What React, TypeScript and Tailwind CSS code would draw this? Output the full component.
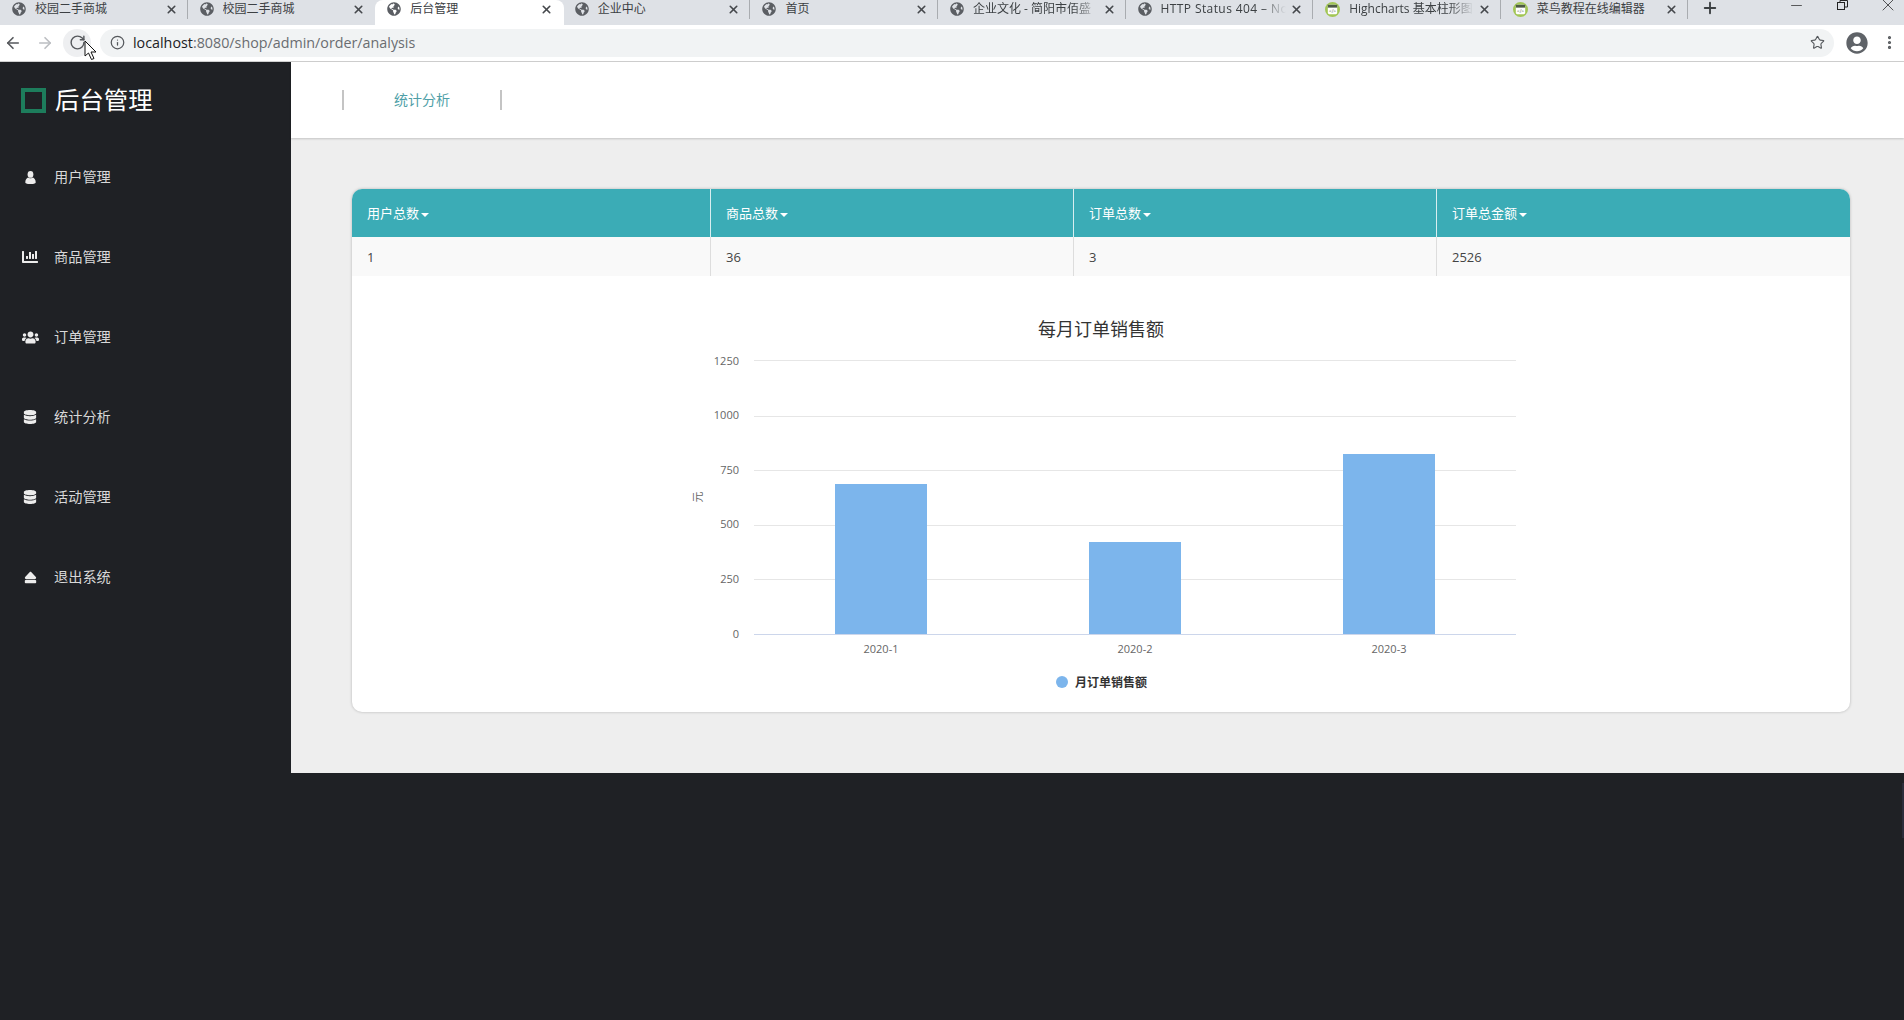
import { FaChartBar, FaUsers, FaDatabase, FaEject, FaGlobeAmericas, FaUserCircle } from 'react-icons/fa'
import { ArrowLeft, ArrowRight, RotateCw, Info, Star, X, Plus, Minus, EllipsisVertical } from 'lucide-react'

const font = 'font-["Open_Sans","Noto_Sans_CJK_SC",sans-serif]'

const tabs = [
  { title: '校园二手商城' },
  { title: '校园二手商城', noSep: true },
  { title: '后台管理', active: true, noSep: true },
  { title: '企业中心' },
  { title: '首页' },
  { title: '企业文化 - 简阳市佰盛', fade: true },
  { title: 'HTTP Status 404 – Not Found', fade: true, wide: true },
  { title: 'Highcharts 基本柱形图', code: true, fade: true },
  { title: '菜鸟教程在线编辑器', code: true },
]

function UserIcon() {
  return (
    <svg width="11" height="13" viewBox="0 0 11 13" fill="currentColor">
      <ellipse cx="5.5" cy="3.4" rx="2.9" ry="3.4" />
      <path d="M3 6.6C1.6 7.4 0.3 8.6 0.3 11.2C0.3 12.4 1.4 13 5.5 13C9.6 13 10.7 12.4 10.7 11.2C10.7 8.6 9.4 7.4 8 6.6C7 7.6 4 7.6 3 6.6Z" />
    </svg>
  )
}

const menu = [
  { label: '用户管理', icon: <UserIcon /> },
  { label: '商品管理', icon: <FaChartBar size={16} /> },
  { label: '订单管理', icon: <FaUsers size={17} /> },
  { label: '统计分析', icon: <FaDatabase size={14} /> },
  { label: '活动管理', icon: <FaDatabase size={14} /> },
  { label: '退出系统', icon: <FaEject size={13} /> },
]

const columns = [
  { head: '用户总数', value: '1', width: 'w-[359px]' },
  { head: '商品总数', value: '36', width: 'w-[363px]' },
  { head: '订单总数', value: '3', width: 'w-[363px]' },
  { head: '订单总金额', value: '2526', width: 'flex-1' },
]

// labels don't sit exactly on their lines in the chart
const ticks = [
  { label: '1250', y: 84, labelY: 89 },
  { label: '1000', y: 140, labelY: 143 },
  { label: '750', y: 194, labelY: 198 },
  { label: '500', y: 249, labelY: 252 },
  { label: '250', y: 303, labelY: 307 },
]

const bars = [
  { label: '2020-1', x: 483, top: 208 },
  { label: '2020-2', x: 737, top: 266 },
  { label: '2020-3', x: 991, top: 178 },
]

function CodeFavicon() {
  return (
    <svg width="15" height="15" viewBox="0 0 16 16" className="shrink-0">
      <circle cx="8" cy="8" r="8" fill="#a2c655" />
      <rect x="3" y="3" width="10" height="10" rx="1.5" fill="#fff" />
      <rect x="3" y="3" width="10" height="3" fill="#4d5a45" />
      <text x="8" y="11.5" textAnchor="middle" fontSize="5" fill="#4d5a45">{'</>'}</text>
    </svg>
  )
}

function Tab({ title, active, code, fade, noSep, wide }: { title: string; active?: boolean; code?: boolean; fade?: boolean; noSep?: boolean; wide?: boolean }) {
  return (
    <div className={`relative flex h-[25px] shrink-0 items-center pb-[7px] pl-[12px] ${active ? 'mr-[-1px] w-[188.6px] rounded-t-lg bg-white pr-[11px]' : 'w-[187.6px] pr-[10px]'}`}>
      {code ? <CodeFavicon /> : <FaGlobeAmericas size={14} className="shrink-0 text-[#5b5e63]" />}
      <span className={`ml-[9px] h-[18px] w-[125px] overflow-hidden whitespace-nowrap text-[12px] leading-[18px] text-[#3c4043] ${fade ? 'mask-r-from-80%' : ''} ${wide ? 'tracking-[0.4px]' : ''}`}>{title}</span>
      <X size={13} strokeWidth={3} className="ml-auto shrink-0 text-[#45484c]" />
      {!noSep && <span className="absolute right-0 top-0 h-[19px] w-px bg-[#a9acb0]" />}
    </div>
  )
}

function BrowserChrome() {
  return (
    <div className="shrink-0">
      <div className="relative flex h-[25px] bg-[#dee1e6]">
        {tabs.map((t, i) => (
          <Tab key={i} {...t} />
        ))}
        <Plus size={18} strokeWidth={2.5} className="ml-[13px] mt-[-1px] text-[#3c4043]" />
        <div className="absolute right-0 top-0 flex h-[10px] items-center text-[#222]">
          <Minus size={17} strokeWidth={1} className="mr-[32px]" />
          <svg width="11" height="10" viewBox="0 0 11 10" fill="none" stroke="#222" className="mr-[30px]">
            <rect x="0.5" y="2.5" width="7" height="7" />
            <path d="M3 2.5V0.5H10.5V7H7.5" />
          </svg>
          <X size={20} strokeWidth={0.9} className="mr-[6px]" />
        </div>
      </div>
      <div className="relative flex h-[37px] items-center border-b border-[#d0d0d0] bg-white pb-[1px]">
        <ArrowLeft size={18} strokeWidth={2.2} className="ml-[4px] text-[#55585c]" />
        <ArrowRight size={18} strokeWidth={2.2} className="ml-[14px] text-[#bcbec2]" />
        <div className="ml-[9px] flex h-[28px] w-[28px] items-center justify-center rounded-full bg-[#eeeff1]">
          <RotateCw size={17} strokeWidth={2} className="text-[#55585c]" />
        </div>
        <div className="ml-[9px] flex h-[28px] w-[1734px] items-center rounded-full bg-[#f1f3f4]">
          <Info size={15} strokeWidth={2} className="ml-[10px] text-[#55585c]" />
          <span className={`ml-[8px] text-[14.3px] text-[#6a6d71] ${font}`}>
            <span className="text-[#202124]">localhost</span>:8080/shop/admin/order/analysis
          </span>
          <Star size={15} strokeWidth={1.8} className="ml-auto mr-[9px] text-[#55585c]" />
        </div>
        <FaUserCircle size={22} className="ml-[12px] text-[#5f6368]" />
        <EllipsisVertical size={17} strokeWidth={2.5} className="ml-[13px] text-[#55585c]" />
        <svg width="14" height="21" viewBox="0 0 14 21" className="absolute left-[84px] top-[15px]">
          <path d="M1 1V16L4.5 13L7.5 19.5L10 18.5L7 12H12Z" fill="#fff" stroke="#111" strokeWidth="1" />
        </svg>
      </div>
    </div>
  )
}

function Sidebar() {
  return (
    <aside className="w-[291px] shrink-0 text-[14.2px] text-[#d8d8d8]">
      <div className="flex h-[76px] items-center pl-[21px]">
        <div className="h-[25px] w-[25px] border-[4px] border-[#1d7d5c]" />
        <span className="ml-[9px] text-[24.4px] text-white">后台管理</span>
      </div>
      <nav className="mt-[-1px] flex flex-col">
        {menu.map((m) => (
          <div key={m.label} className="flex h-[80px] items-center">
            <span className="flex w-[54px] justify-center pl-[6px] text-[#ececec]">{m.icon}</span>
            {m.label}
          </div>
        ))}
      </nav>
    </aside>
  )
}

function SalesChart() {
  return (
    <svg width="1498" height="436" viewBox="0 0 1498 436" className="block">
      <text x="749" y="60" textAnchor="middle" fontSize="18" fill="#333333">每月订单销售额</text>
      {ticks.map((t) => (
        <g key={t.label}>
          <line x1="402" x2="1164" y1={t.y + 0.5} y2={t.y + 0.5} stroke="#e6e6e6" />
          <text x="387" y={t.labelY} textAnchor="end" fontSize="11" fill="#666666">{t.label}</text>
        </g>
      ))}
      <line x1="402" x2="1164" y1="358.5" y2="358.5" stroke="#ccd6eb" />
      <text x="387" y="362" textAnchor="end" fontSize="11" fill="#666666">0</text>
      <text transform="translate(350 221) rotate(-90)" textAnchor="middle" fontSize="11" fill="#666666">元</text>
      {bars.map((b) => (
        <g key={b.label}>
          <rect x={b.x} y={b.top} width="92" height={358 - b.top} fill="#7cb5ec" />
          <text x={b.x + 46} y="377" textAnchor="middle" fontSize="11" fill="#666666">{b.label}</text>
        </g>
      ))}
      <circle cx="710" cy="406" r="6" fill="#7cb5ec" />
      <text x="723" y="411" fontSize="12" fontWeight="700" fill="#333333">月订单销售额</text>
    </svg>
  )
}

function StatsCard() {
  return (
    <div className="overflow-hidden rounded-[10px] bg-white shadow-[0_0_3px_rgba(0,0,0,0.25)]">
      <div className="flex h-[48px] bg-[#3bacb6] text-[13px] text-white">
        {columns.map((c, i) => (
          <div key={c.head} className={`flex items-center pl-[15px] pt-[1px] ${c.width} ${i < 3 ? 'border-r border-[#d8eef0]' : ''}`}>
            {c.head}
            <span className="ml-[2px] mt-[2px] border-x-[4px] border-t-[4px] border-x-transparent border-t-white" />
          </div>
        ))}
      </div>
      <div className="flex h-[39px] bg-[#f9f9f9] text-[13px] text-[#444]">
        {columns.map((c, i) => (
          <div key={c.head} className={`flex items-center pl-[15px] pt-[2px] ${c.width} ${i < 3 ? 'border-r border-[#dddddd]' : ''}`}>
            {c.value}
          </div>
        ))}
      </div>
      <SalesChart />
    </div>
  )
}

export default function App() {
  return (
    <div className={`relative flex h-[1020px] flex-col overflow-hidden bg-[#1f2125] ${font}`}>
      <BrowserChrome />
      <div className="flex flex-1">
        <Sidebar />
        <main className="flex-1">
          <div className="relative z-10 flex h-[76px] items-center bg-white pl-[51px] shadow-[0_1px_2px_rgba(0,0,0,0.18)]">
            <div className="flex h-[20px] w-[160px] items-center justify-center border-x-2 border-[#c4c4c4] pb-[2px] text-[14px] text-[#4f9fa8]">
              统计分析
            </div>
          </div>
          <div className="h-[635px] bg-[#eeeeee] pl-[61px] pr-[54px] pt-[51px]">
            <StatsCard />
          </div>
        </main>
      </div>
      <div className="absolute right-0 top-[783px] h-[55px] w-[2px] bg-[#2b2d3a]" />
    </div>
  )
}
